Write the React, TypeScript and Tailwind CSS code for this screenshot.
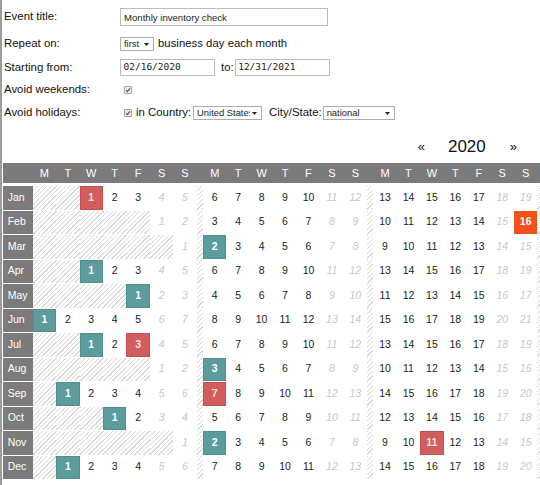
import React from 'react'

const DAYS = ['M', 'T', 'W', 'T', 'F', 'S', 'S']
const MONTHS = ['Jan', 'Feb', 'Mar', 'Apr', 'May', 'Jun', 'Jul', 'Aug', 'Sep', 'Oct', 'Nov', 'Dec']
const YEAR = 2020
const START = new Date(2020, 1, 16)
const HOLIDAYS: Record<number, number[]> = { 0: [1], 6: [3], 8: [7], 10: [11] }
const BLOCKS = 3

const hatch =
    'bg-[repeating-linear-gradient(135deg,#d8d8d8_0px,#d8d8d8_1px,#ffffff_1px,#ffffff_3.2px)]'

const weekday = (m: number, d: number) => (new Date(YEAR, m, d).getDay() + 6) % 7

function firstBusinessDay(m: number) {
    for (let d = 1; d <= 7; d++) {
        if (weekday(m, d) < 5 && !(HOLIDAYS[m] || []).includes(d)) return d
    }
    return 1
}

function Check() {
    return (
        <span className="inline-flex h-[8px] w-[8px] items-center justify-center rounded-[1px] border border-[#a3a3a3] bg-[#e9e9e9]">
            <svg width="6" height="6" viewBox="0 0 6 6">
                <path d="M1 3.2 L2.4 4.6 L5 1.4" fill="none" stroke="#555" strokeWidth="1.1" />
            </svg>
        </span>
    )
}

function Select({ value, width }: { value: string; width: string }) {
    return (
        <div className={`flex h-[13.5px] items-center border border-[#adadad] bg-white pl-[3px] pr-[4px] ${width}`}>
            <span className="flex-1 overflow-hidden whitespace-nowrap text-[9.4px] leading-none text-[#222]">{value}</span>
            <svg width="5" height="3" viewBox="0 0 5 3" className="ml-[2px] shrink-0">
                <path d="M0 0 L5 0 L2.5 3 Z" fill="#222" />
            </svg>
        </div>
    )
}

function DayCell({ m, b, c }: { m: number; b: number; c: number }) {
    const offset = weekday(m, 1)
    const dim = new Date(YEAR, m + 1, 0).getDate()
    const day = b * 7 + c - offset + 1

    if (day < 1 || day > dim) return <div className={hatch} />

    const date = new Date(YEAR, m, day)
    const isStart = date.getTime() === START.getTime()
    const isHoliday = (HOLIDAYS[m] || []).includes(day)
    const isRepeat = date >= START && day === firstBusinessDay(m)

    if (isStart)
        return (
            <div className="flex items-center justify-center bg-[#f3501c] text-[10.5px] font-bold text-white">{day}</div>
        )
    if (isHoliday)
        return (
            <div className="flex items-center justify-center border border-[#c65050] bg-[#d35c5c] text-[10.5px] font-bold text-[#fbe2e2]">
                {day}
            </div>
        )
    if (isRepeat)
        return (
            <div className="flex items-center justify-center border border-[#4f8f8f] bg-[#5c9c9c] text-[10.5px] font-bold text-white">
                {day}
            </div>
        )
    if (c >= 5)
        return <div className="flex items-center justify-center bg-white text-[10.5px] italic text-[#c8c8c8]">{day}</div>
    return <div className="flex items-center justify-center bg-white text-[10.5px] text-[#222]">{day}</div>
}

export default function App() {
    // month label, three weeks with a hatched gap after each
    const cols =
        'grid w-[538px] grid-cols-[30px_repeat(7,23.45px)_6.25px_repeat(7,23.45px)_6.25px_repeat(7,23.45px)_1fr]'

    return (
        <div className="h-[485px] w-[540px] overflow-hidden border-l-2 border-[#9c9c9c] bg-white font-['Liberation_Sans',Arial,sans-serif] text-[11.4px] text-[#111]">
            {/* form */}
            <div className="pl-[2px] pt-[6px]">
                <div className="flex h-[22px] items-center">
                    <span className="w-[116px]">Event title:</span>
                    <input
                        readOnly
                        value="Monthly inventory check"
                        className="h-[18px] w-[208px] border border-[#bcbcbc] px-[3px] text-[9.6px] text-[#222] outline-none"
                    />
                </div>
                <div className="mt-[5px] flex h-[22px] items-center">
                    <span className="w-[116px]">Repeat on:</span>
                    <Select value="first" width="w-[34px]" />
                    <span className="ml-[4px]">business day each month</span>
                </div>
                <div className="mt-[1.5px] flex h-[22px] items-center">
                    <span className="w-[116px]">Starting from:</span>
                    <div className="flex h-[17.5px] w-[95px] items-center border border-[#bcbcbc] px-[2.5px] font-['DejaVu_Sans_Mono',monospace] text-[9.5px] text-[#222]">
                        02/16/2020
                    </div>
                    <span className="ml-[6px]">to:</span>
                    <div className="ml-px flex h-[17.5px] w-[95px] items-center border border-[#bcbcbc] px-[2.5px] font-['DejaVu_Sans_Mono',monospace] text-[9.5px] text-[#222]">
                        12/31/2021
                    </div>
                </div>
                <div className="mt-[0.5px] flex h-[22px] items-center">
                    <span className="w-[116px]">Avoid weekends:</span>
                    <span className="ml-[4px] flex">
                        <Check />
                    </span>
                </div>
                <div className="mt-px flex h-[22px] items-center">
                    <span className="w-[116px]">Avoid holidays:</span>
                    <span className="ml-[4px] flex">
                        <Check />
                    </span>
                    <span className="ml-[4px]">in Country:</span>
                    <span className="ml-[2px]">
                        <Select value="United States" width="w-[69px]" />
                    </span>
                    <span className="ml-[7px]">City/State:</span>
                    <span className="ml-px">
                        <Select value="national" width="w-[72px]" />
                    </span>
                </div>
            </div>

            {/* year nav */}
            <div className="mt-[11px] flex h-[24px] items-center justify-end pr-[23px] text-[#111]">
                <span className="text-[13px]">«</span>
                <span className="ml-[23px] text-[17px]">{YEAR}</span>
                <span className="ml-[24px] text-[13px]">»</span>
            </div>

            {/* calendar */}
            <div className="mt-[4px] pl-[0.7px]">
                <div className={`${cols} h-[20px] items-center bg-[#7b7b7b] text-[11px] text-white`}>
                    <div />
                    {Array.from({ length: BLOCKS }).map((_, b) => (
                        <React.Fragment key={b}>
                            {DAYS.map((d, i) => (
                                <div key={i} className="text-center">
                                    {d}
                                </div>
                            ))}
                            <div />
                        </React.Fragment>
                    ))}
                </div>
                <div className={`${cols} mt-[3px] auto-rows-[23.5px] gap-y-px`}>
                    {MONTHS.map((name, m) => (
                        <React.Fragment key={name}>
                            <div className="flex items-center bg-[#7b7b7b] pl-[5px] text-[10.5px] text-white">{name}</div>
                            {Array.from({ length: BLOCKS }).map((_, b) => (
                                <React.Fragment key={b}>
                                    {DAYS.map((_, c) => (
                                        <DayCell key={c} m={m} b={b} c={c} />
                                    ))}
                                    <div className={hatch} />
                                </React.Fragment>
                            ))}
                        </React.Fragment>
                    ))}
                </div>
            </div>
        </div>
    )
}
